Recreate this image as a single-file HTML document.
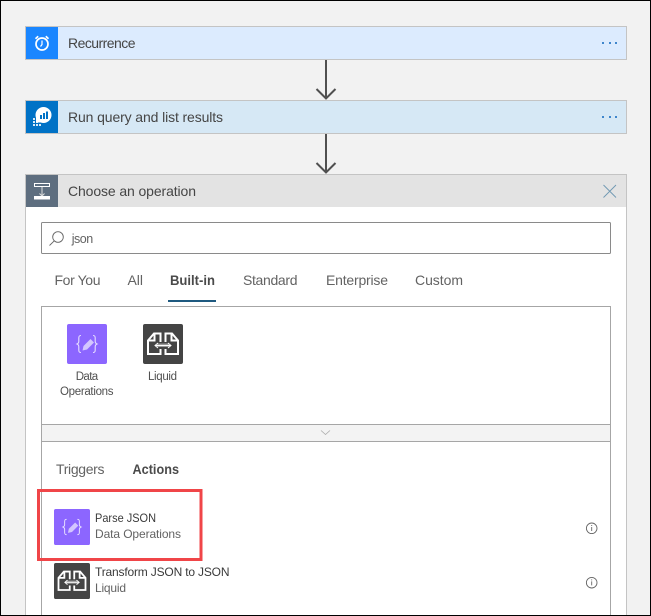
<!DOCTYPE html>
<html><head><meta charset="utf-8"><style>
html,body{margin:0;padding:0;background:#f2f2f2}
svg{display:block}
text{font-family:"Liberation Sans",sans-serif;fill:#454545;font-size:14px}
.s{font-size:12px;fill:#3a3a3a}
.l{font-size:11.5px;fill:#505050}
.t{fill:#636363}
.b{font-weight:bold;fill:#4a4a4a}
</style></head><body>
<svg width="651" height="616" viewBox="0 0 651 616" xmlns="http://www.w3.org/2000/svg">
<defs>
<g id="data"><rect width="40" height="40" rx="2" fill="#8c66ff"/>
<g fill="none" stroke="#e6deff" stroke-width="1.100"><path d="M14 11.500c-2 0-2.200 1-2.200 2.500v3.300c0 1.500-.8 2.300-1.800 2.700 1 .4 1.800 1.200 1.800 2.700v3.300c0 1.500.2 2.500 2.200 2.500"/><path d="M26 11.500c2 0 2.200 1 2.200 2.500v3.300c0 1.500.8 2.300 1.800 2.700-1 .4-1.800 1.200-1.800 2.700v3.300c0 1.500-.2 2.500-2.200 2.500"/></g>
<path d="M15.500 26.500l1-4.500 7-7 3.500 3.500-7 7z" fill="#d3c6ff"/></g>
<g id="liq"><rect width="40" height="40" rx="2" fill="#444"/>
<g fill="none" stroke="#fff" stroke-width="2"><path d="M17.500 18V9.500H11L5 16.500V30H17.500V25"/><path d="M11.500 9.500V16.500H5"/><path d="M22.500 18V9.500H29L35 16.500V30H22.500V25"/><path d="M28.500 9.500V16.500H35"/></g>
<path d="M14 19.500h12v3.500H14z" fill="#9a9a9a"/><path d="M15 19l-3 2.500 3 2.500M25 19l3 2.500-3 2.500M12 21.500h16" fill="none" stroke="#fff" stroke-width="1"/></g>
</defs>
<rect width="651" height="616" fill="#f2f2f2"/>
<path d="M0 .5H650.500V615.500H0.500V0" fill="none" stroke="#000"/>

<!-- arrows -->
<g fill="none" stroke="#505050" stroke-width="2"><path d="M326 60V98M316.500 89l9.500 9.500 9.500-9.500"/><path d="M326 134V172M316.500 163l9.500 9.500 9.500-9.500"/></g>

<!-- card 1 -->
<rect x="25.500" y="26.500" width="601" height="33" fill="#dcebfe" stroke="#c4c4c4"/>
<rect x="26" y="27" width="32" height="32" fill="#1a86ff"/>
<g fill="none" stroke="#fff" stroke-width="1.700"><circle cx="42" cy="44" r="6"/><path d="M42 40.500V44.500L40.500 46.500" stroke-width="1.200"/><path d="M35.500 38.800l2.700-2.500M48.500 38.800l-2.700-2.500"/></g>
<text x="68" y="48" textLength="67.500" lengthAdjust="spacing">Recurrence</text>
<g fill="#3f86cc"><rect x="602" y="42" width="2" height="2"/><rect x="609" y="42" width="2" height="2"/><rect x="615" y="42" width="2" height="2"/></g>

<!-- card 2 -->
<rect x="25.500" y="100.500" width="601" height="33" fill="#d6e8f5" stroke="#c4c4c4"/>
<rect x="26" y="101" width="32" height="32" fill="#0072c6"/>
<circle cx="43.500" cy="115" r="8" fill="#fff"/><path d="M36 117v5.500h5z" fill="#fff"/>
<g fill="#0072c6"><rect x="40" y="115" width="2" height="4"/><rect x="43" y="113" width="2" height="6"/><rect x="46" y="111.500" width="2" height="7.500"/></g>
<g fill="#fff" opacity=".85"><rect x="33" y="118" width="2" height="2"/><rect x="33" y="121" width="2" height="2"/><rect x="33" y="124" width="2" height="2"/><rect x="36" y="124" width="2" height="2"/><rect x="39" y="124" width="2" height="2"/><rect x="36" y="121" width="2" height="2"/></g>
<text x="68" y="122" textLength="155" lengthAdjust="spacing">Run query and list results</text>
<g fill="#3f86cc"><rect x="602" y="116" width="2" height="2"/><rect x="609" y="116" width="2" height="2"/><rect x="615" y="116" width="2" height="2"/></g>

<!-- panel -->
<rect x="25.500" y="174.500" width="601" height="441" fill="#fff" stroke="#c4c4c4"/>
<path d="M0 615.500H651" stroke="#000"/>
<rect x="26" y="175" width="600" height="32" fill="#e3e3e3"/>
<rect x="26" y="175" width="32" height="32" fill="#5e6e7f"/>
<rect x="34.500" y="183.500" width="15" height="3" fill="none" stroke="#fff"/>
<path d="M42 187v9M39.500 193.500l2.500 2.500 2.500-2.500" fill="none" stroke="#ddd" stroke-width="1"/>
<rect x="34" y="196" width="16" height="3.500" fill="#fff"/>
<text x="68" y="196" textLength="128" lengthAdjust="spacing">Choose an operation</text>
<path d="M603.500 185l12.500 12.500M616 185l-12.500 12.500" stroke="#6f98b2" stroke-width=".9" fill="none"/>

<!-- search -->
<rect x="41.500" y="222.500" width="569" height="31" rx="1" fill="#fff" stroke="#8a8a8a"/>
<circle cx="58" cy="237" r="5.300" fill="none" stroke="#666" stroke-width=".9"/><path d="M54.300 240.800L49.500 245.500" stroke="#666" stroke-width=".9"/>
<text x="71.700" y="243" class="s t" style="font-size:12.500px" textLength="21.500" lengthAdjust="spacing">json</text>

<!-- tabs -->
<text x="54.500" y="285" class="t" textLength="46" lengthAdjust="spacing">For You</text>
<text x="127.500" y="285" class="t" textLength="15.500" lengthAdjust="spacing">All</text>
<text x="170" y="285" class="b" style="font-size:13.500px" textLength="45" lengthAdjust="spacingAndGlyphs">Built-in</text>
<text x="243" y="285" class="t" textLength="54.500" lengthAdjust="spacing">Standard</text>
<text x="326" y="285" class="t" textLength="62" lengthAdjust="spacing">Enterprise</text>
<text x="415" y="285" class="t" textLength="48" lengthAdjust="spacing">Custom</text>
<rect x="168" y="300" width="48" height="2" fill="#1f5a80"/>

<!-- box -->
<rect x="41.500" y="306.500" width="569" height="310" fill="#fff" stroke="#a6a6a6"/>
<rect x="42" y="424" width="568" height="17" fill="#f3f3f3"/>
<path d="M41 424.500H611M41 441.500H611" stroke="#a6a6a6"/>
<path d="M321 430.500l4.500 4 4.500-4" fill="none" stroke="#aaa" stroke-width=".8"/>
<path d="M0 615.500H651" stroke="#000"/>

<use href="#data" x="67" y="324"/>
<use href="#liq" x="143" y="324"/>
<text x="75.700" y="380" class="l" textLength="22.500" lengthAdjust="spacing">Data</text>
<text x="60" y="395" class="l" textLength="53.500" lengthAdjust="spacing">Operations</text>
<text x="148" y="380" class="l" textLength="29" lengthAdjust="spacing">Liquid</text>

<text x="56" y="474" class="t" textLength="48.500" lengthAdjust="spacing">Triggers</text>
<text x="132.500" y="474" class="b" style="font-size:13.500px" textLength="46.500" lengthAdjust="spacingAndGlyphs">Actions</text>

<use href="#data" transform="translate(54 509) scale(.9)"/>
<text x="95" y="522" class="s" textLength="61" lengthAdjust="spacingAndGlyphs">Parse JSON</text>
<text x="95" y="538" class="s t" textLength="86" lengthAdjust="spacing">Data Operations</text>
<use href="#liq" transform="translate(54 563) scale(.9)"/>
<text x="95" y="576" class="s" textLength="134.500" lengthAdjust="spacing">Transform JSON to JSON</text>
<text x="95" y="592" class="s t" textLength="31" lengthAdjust="spacing">Liquid</text>

<rect x="38.500" y="490.500" width="162.500" height="69" fill="none" stroke="#f04548" stroke-width="3"/>

<g fill="none" stroke="#666" stroke-width=".9"><circle cx="591.700" cy="528.300" r="5.300"/><path d="M591.700 527v4M591.700 525v1"/><circle cx="591.700" cy="582.700" r="5.300"/><path d="M591.700 581.400v4M591.700 579.400v1"/></g>
</svg>
</body></html>
